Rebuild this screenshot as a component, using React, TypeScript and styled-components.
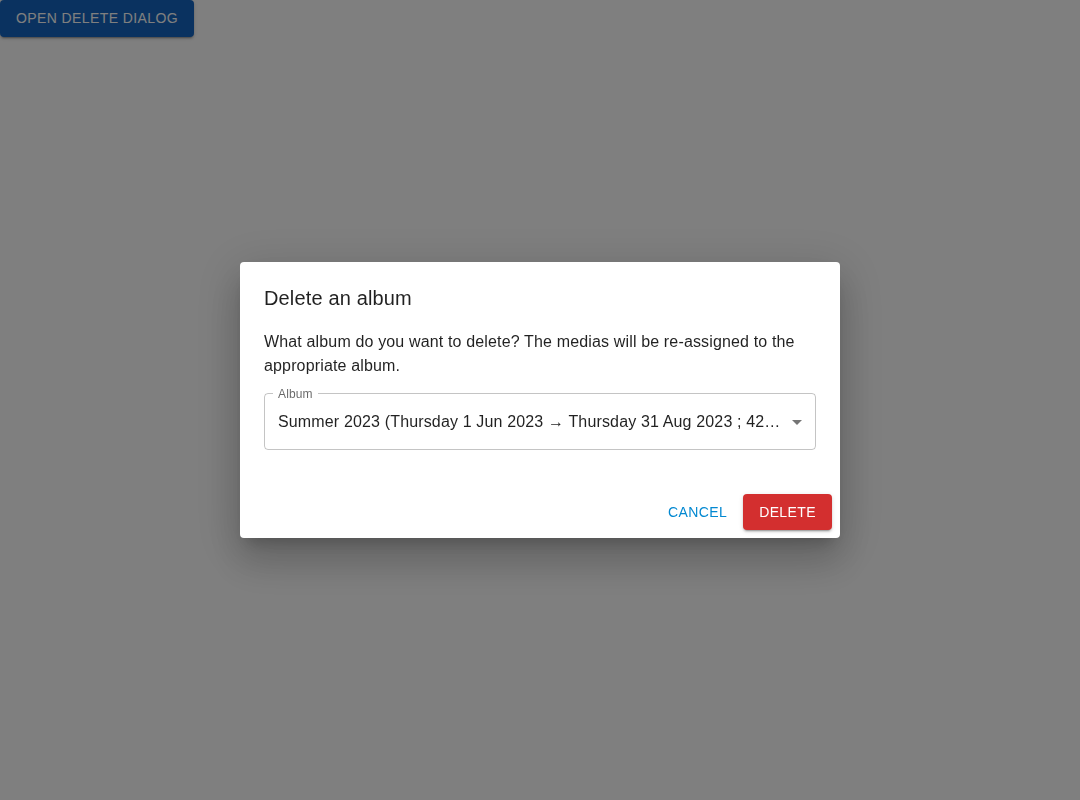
import styled, { createGlobalStyle } from "styled-components";

const GlobalStyle = createGlobalStyle`
  html, body {
    margin: 0;
    padding: 0;
    background: #fff;
    font-family: "Liberation Sans", Arial, sans-serif;
  }
  * {
    box-sizing: border-box;
  }
`;

const Page = styled.div`
  min-height: 100vh;
`;

const LaunchButton = styled.button`
  display: inline-flex;
  align-items: center;
  justify-content: center;
  height: 36.5px;
  padding: 6px 16px;
  border: 0;
  border-radius: 4px;
  background: #1565c0;
  color: #fff;
  font-family: "Liberation Sans", Arial, sans-serif;
  font-size: 14px;
  font-weight: 400;
  letter-spacing: 0.4px;
  text-transform: uppercase;
  box-shadow: 0px 3px 1px -2px rgba(0, 0, 0, 0.2), 0px 2px 2px 0px rgba(0, 0, 0, 0.14),
    0px 1px 5px 0px rgba(0, 0, 0, 0.12);
  cursor: pointer;
`;

const Backdrop = styled.div`
  position: fixed;
  inset: 0;
  background: rgba(0, 0, 0, 0.5);
  display: flex;
  align-items: center;
  justify-content: center;
`;

const Paper = styled.div`
  width: calc(100% - 64px);
  max-width: 600px;
  margin: 32px;
  background: #fff;
  border-radius: 4px;
  color: rgba(0, 0, 0, 0.87);
  display: flex;
  flex-direction: column;
  box-shadow: 0px 11px 15px -7px rgba(0, 0, 0, 0.2), 0px 24px 38px 3px rgba(0, 0, 0, 0.14),
    0px 9px 46px 8px rgba(0, 0, 0, 0.12);
`;

const Title = styled.h2`
  margin: 0;
  padding: 20px 24px 16px;
  font-size: 20px;
  font-weight: 400;
  line-height: 32px;
  letter-spacing: 0.15px;
`;

const Content = styled.div`
  padding: 0 24px 20px;
`;

const Text = styled.p`
  margin: 0;
  font-size: 16px;
  line-height: 24px;
  letter-spacing: 0.15px;
`;

const Field = styled.fieldset`
  margin: 10px 0 16px;
  padding: 0 6px 0 8px;
  border: 1px solid rgba(0, 0, 0, 0.23);
  border-radius: 4px;
  min-width: 0;
`;

const Legend = styled.legend`
  padding: 0 5px;
  font-size: 12px;
  line-height: 12px;
  color: rgba(0, 0, 0, 0.6);
  letter-spacing: 0.15px;
`;

const SelectRow = styled.div`
  display: flex;
  align-items: flex-start;
`;

const SelectValue = styled.div`
  flex: 1;
  min-width: 0;
  padding: 10.5px 0 15.5px 5px;
  font-size: 16px;
  line-height: 23px;
  letter-spacing: 0.15px;
  white-space: nowrap;
  overflow: hidden;
  text-overflow: ellipsis;
`;

const Arrow = styled.svg`
  width: 24px;
  height: 24px;
  margin: 10px 0 0 2px;
  flex-shrink: 0;
  fill: rgba(0, 0, 0, 0.54);
`;

const Actions = styled.div`
  display: flex;
  justify-content: flex-end;
  align-items: center;
  gap: 8px;
  padding: 8px;
`;

const ActionButton = styled.button<{ $variant: "text" | "contained" }>`
  height: 36.5px;
  padding: ${(p) => (p.$variant === "text" ? "6px 8px" : "6px 16px")};
  border: 0;
  border-radius: 4px;
  font-family: "Liberation Sans", Arial, sans-serif;
  font-size: 14px;
  font-weight: 400;
  letter-spacing: 0.4px;
  text-transform: uppercase;
  cursor: pointer;
  background: ${(p) => (p.$variant === "text" ? "transparent" : "#d32f2f")};
  color: ${(p) => (p.$variant === "text" ? "#0288d1" : "#fff")};
  box-shadow: ${(p) =>
    p.$variant === "text"
      ? "none"
      : "0px 3px 1px -2px rgba(0,0,0,0.2), 0px 2px 2px 0px rgba(0,0,0,0.14), 0px 1px 5px 0px rgba(0,0,0,0.12)"};
`;

export default function App() {
  return (
    <Page>
      <GlobalStyle />
      <LaunchButton>Open delete dialog</LaunchButton>
      <Backdrop>
        <Paper role="dialog">
          <Title>Delete an album</Title>
          <Content>
            <Text>
              What album do you want to delete? The medias will be re-assigned to the
              appropriate album.
            </Text>
            <Field>
              <Legend>Album</Legend>
              <SelectRow>
                <SelectValue>
                  Summer 2023 (Thursday 1 Jun 2023 → Thursday 31 Aug 2023 ; 42 medias)
                </SelectValue>
                <Arrow viewBox="0 0 24 24">
                  <path d="M7 10l5 5 5-5z" />
                </Arrow>
              </SelectRow>
            </Field>
          </Content>
          <Actions>
            <ActionButton $variant="text">Cancel</ActionButton>
            <ActionButton $variant="contained">Delete</ActionButton>
          </Actions>
        </Paper>
      </Backdrop>
    </Page>
  );
}
